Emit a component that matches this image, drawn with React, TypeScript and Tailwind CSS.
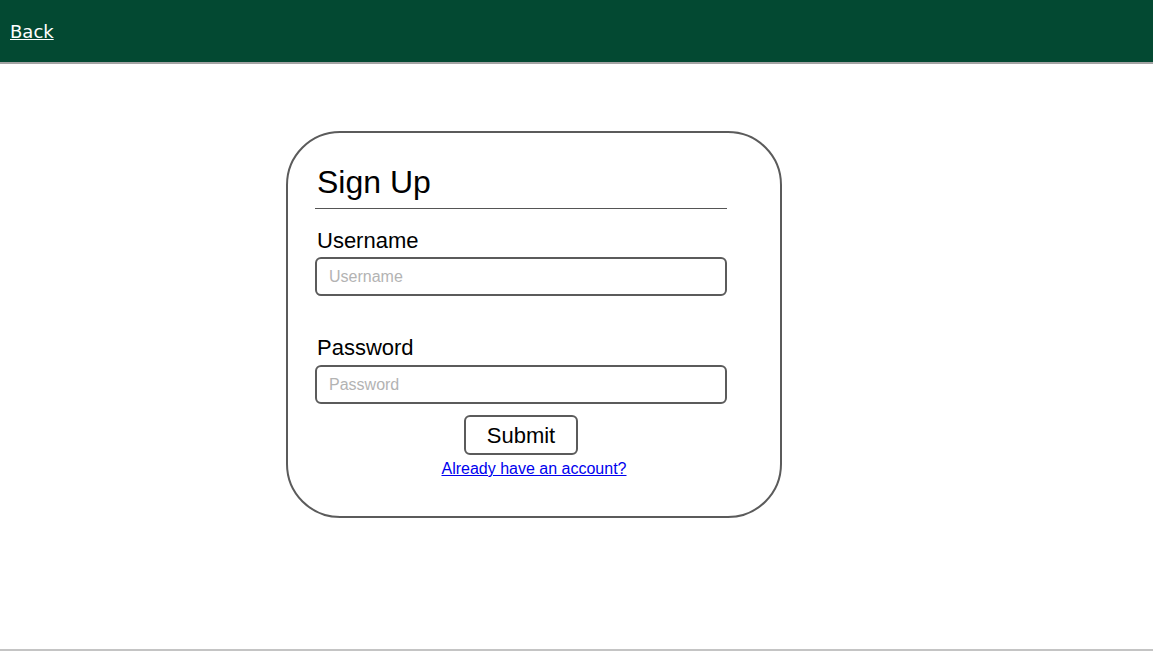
import React from 'react'

const App = () => {
  return (
    <div className="h-screen flex flex-col bg-white font-['Liberation_Sans',Arial,sans-serif]">
      {/* Top bar */}
      <header className="h-[64px] shrink-0 bg-[#034932] border-b-2 border-[#a3a3a3] flex items-center px-[10px]">
        <a href="#" className="text-white underline text-[18px] font-['DejaVu_Sans',Verdana,sans-serif] leading-none mt-[1px]">
          Back
        </a>
      </header>

      <main className="flex-1">
        <div className="ml-[286px] mt-[67px] w-[496px] h-[387px] border-2 border-[#5b5b5b] rounded-[54px] pt-[31px] pl-[27px]">
          <div className="w-[412px]">
            <h1 className="text-[32px] leading-[37px] text-black px-[2px]">Sign Up</h1>
            <hr className="mt-[7px] border-0 h-px bg-[#555]" />

            <label className="block mt-[19px] mb-[4px] px-[2px] text-[22px] leading-[25px] text-black">Username</label>
            <input
              type="text"
              placeholder="Username"
              className="block w-[412px] h-[39px] border-2 border-[#5b5b5b] rounded-[6px] px-[12px] text-[16px] placeholder:text-[#b3b3b3] outline-none"
            />

            <label className="block mt-[39px] mb-[5px] px-[2px] text-[22px] leading-[25px] text-black">Password</label>
            <input
              type="password"
              placeholder="Password"
              className="block w-[412px] h-[39px] border-2 border-[#5b5b5b] rounded-[6px] px-[12px] text-[16px] placeholder:text-[#b3b3b3] outline-none"
            />

            <div className="flex justify-center mt-[11px]">
              <button className="w-[114px] h-[40px] border-2 border-[#5b5b5b] rounded-[6px] bg-white text-[22px] text-black">
                Submit
              </button>
            </div>
          </div>
          <div className="flex justify-center mt-[5px] -ml-[27px]">
            <a href="#" className="text-[16px] leading-[18px] text-[#0000ee] underline">
              Already have an account?
            </a>
          </div>
        </div>
      </main>

      <footer className="h-[2px] shrink-0 bg-[#c4c4c4]" />
    </div>
  )
}

export default App
